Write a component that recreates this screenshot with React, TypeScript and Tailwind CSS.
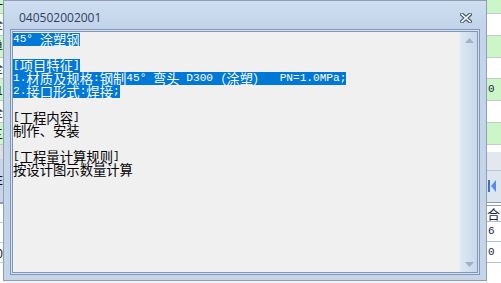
import type { ReactNode } from "react";

// half-width (ascii) runs get a mono face sized so each char is exactly half a CJK cell
function Mixed({ text }: { text: string }) {
  const parts = text.match(/[\x00-\xff]+|[^\x00-\xff]+/g) ?? [];
  return (
    <>
      {parts.map((p, i) =>
        /^[\x00-\xff]/.test(p) ? (
          <span key={i} className="font-['Liberation_Mono',monospace] text-[11.11px] leading-[13px]">
            {p}
          </span>
        ) : (
          <span key={i} className="font-['Noto_Sans_CJK_SC',sans-serif] text-[13.33px] leading-[13px]">
            {p}
          </span>
        )
      )}
    </>
  );
}

const LINES: { text: string; selected: boolean }[] = [
  { text: "45° 涂塑钢", selected: true },
  { text: "", selected: false },
  { text: "[项目特征]", selected: true },
  { text: "1.材质及规格:钢制45° 弯头 D300（涂塑）  PN=1.0MPa;", selected: true },
  { text: "2.接口形式:焊接;", selected: true },
  { text: "", selected: false },
  { text: "[工程内容]", selected: false },
  { text: "制作、安装", selected: false },
  { text: "", selected: false },
  { text: "[工程量计算规则]", selected: false },
  { text: "按设计图示数量计算", selected: false },
];

type Row = { h: string; bg: string; border?: string; content?: ReactNode };

const GREEN = "bg-[#ccf5c8]";

function StripRow({ h, bg, border, content }: Row) {
  return (
    <div className={`${h} ${bg} ${border ?? ""} flex items-center overflow-hidden whitespace-nowrap`}>
      {content}
    </div>
  );
}

function LeftStrip() {
  const frag = (c: string) => (
    <div className="flex w-full justify-end font-['Noto_Sans_CJK_SC',sans-serif] text-[12px] leading-none text-[#111]">
      <span className="shrink-0">{c}</span>
    </div>
  );
  const rows: Row[] = [
    { h: "h-[14px]", bg: GREEN, border: "border-b border-[#bcc8bc]", content: frag("计") },
    { h: "h-[22px]", bg: "bg-[#f4fbf2]", border: "border-b border-[#bcc8bc]", content: frag("全") },
    { h: "h-[22px]", bg: GREEN, border: "border-b border-[#bcc8bc]", content: frag("单") },
    { h: "h-[22px]", bg: "bg-[#f4fbf2]", border: "border-b border-[#bcc8bc]", content: frag("全") },
    { h: "h-[22px]", bg: GREEN, border: "border-b border-[#bcc8bc]", content: frag("1") },
    { h: "h-[22px]", bg: "bg-[#f4fbf2]", border: "border-b border-[#bcc8bc]", content: frag("全") },
    { h: "h-[22px]", bg: GREEN, border: "border-b border-[#bcc8bc]", content: frag("三") },
    { h: "h-[14px]", bg: "bg-[#dcdfe4]" },
    { h: "h-[45px]", bg: "bg-[#c6d4e6]", border: "border-b-2 border-[#8fa0b8]", content: frag("E") },
    { h: "h-[20px]", bg: "bg-white", border: "border-b border-[#c4ccd8]" },
    { h: "h-[20px]", bg: "bg-white", border: "border-b border-[#c4ccd8]" },
    { h: "h-[20px]", bg: "bg-white", border: "border-b border-[#c4ccd8]", content: frag("0") },
    { h: "h-[20px]", bg: "bg-white" },
  ];
  return (
    <div className="flex w-[3px] shrink-0 flex-col overflow-hidden">
      {rows.map((r, i) => (
        <StripRow key={i} {...r} />
      ))}
    </div>
  );
}

function RightStrip() {
  const cell = (c: string) => (
    <span className="pl-px font-['Liberation_Mono',monospace] text-[11px] leading-none text-[#1a2a44]">{c}</span>
  );
  const rows: Row[] = [
    { h: "h-[14px]", bg: GREEN, border: "border-b border-[#c3cfc3]" },
    { h: "h-[22px]", bg: "bg-white", border: "border-b border-[#c3cfc3]" },
    { h: "h-[22px]", bg: GREEN, border: "border-b border-[#c3cfc3]" },
    { h: "h-[22px]", bg: "bg-white", border: "border-b border-[#c3cfc3]" },
    { h: "h-[22px]", bg: GREEN, border: "border-b border-[#c3cfc3]", content: cell("0") },
    { h: "h-[22px]", bg: "bg-white", border: "border-b border-[#c3cfc3]" },
    { h: "h-[22px]", bg: GREEN, border: "border-b border-[#c3cfc3]" },
    { h: "h-[7px]", bg: "bg-white" },
    { h: "h-[19px]", bg: "bg-[#e3e8ef]", border: "border-b border-[#b7c4d6]" },
    {
      h: "h-[31px]",
      bg: "bg-[#dde5ef]",
      content: (
        <svg width="8" height="12" viewBox="0 0 8 12" className="ml-px">
          <rect x="0" y="0" width="2" height="12" fill="#3d6fd6" />
          <path d="M8 0 L3 6 L8 12 Z" fill="#5a8ae6" />
        </svg>
      ),
    },
    { h: "h-[4px]", bg: "bg-white", border: "border-y border-[#8a9bb3]" },
    {
      h: "h-[17px]",
      bg: "bg-white",
      border: "border-b border-[#b8c3d2]",
      content: (
        <span className="font-['Noto_Sans_CJK_SC',sans-serif] text-[13px] leading-none text-[#1a2a44]">合</span>
      ),
    },
    { h: "h-[20px]", bg: "bg-white", border: "border-b border-[#b8c3d2]", content: cell("6") },
    { h: "h-[21px]", bg: "bg-white", border: "border-b border-[#b8c3d2]", content: cell("0") },
    { h: "h-[20px]", bg: "bg-white" },
  ];
  return (
    <div className="flex min-w-0 flex-1 flex-col overflow-hidden">
      {rows.map((r, i) => (
        <StripRow key={i} {...r} />
      ))}
    </div>
  );
}

export default function App() {
  return (
    <div className="flex h-[283px] w-[501px] overflow-hidden bg-[#f2f4f7]">
      <LeftStrip />

      <div className="flex h-[281px] w-[484px] shrink-0 flex-col border border-[#8e9db3] bg-[#c4d5ea]">
        <div className="flex h-[28px] items-center justify-between bg-gradient-to-b from-[#cfdef1] to-[#c1d3ea] pt-[5px] pl-[15px] pr-[14px]">
          <span className="font-['Open_Sans',sans-serif] text-[12px] leading-none text-[#2f4260]">040502002001</span>
          <svg width="12" height="10" viewBox="0 0 12 10">
            <path d="M2 1.5 L10 8.5 M10 1.5 L2 8.5" stroke="#4a586c" strokeWidth="3.8" strokeLinecap="square" />
            <path d="M2 1.5 L10 8.5 M10 1.5 L2 8.5" stroke="#ffffff" strokeWidth="1.6" strokeLinecap="square" />
          </svg>
        </div>

        <div className="mx-[6px] h-[246px] border border-[#7f96b6] bg-[#d6e2f2] p-px">
          <div className="flex h-full border border-[#7f96b6]">
            <div className="min-w-0 flex-1 bg-[#f0f0f0] pt-px text-black">
              {LINES.map((line, i) => (
                <div key={i} className="flex h-[13px] items-center whitespace-pre">
                  {line.text &&
                    (line.selected ? (
                      <span className="inline-flex h-[13px] items-center bg-[#0078d7] text-white">
                        <Mixed text={line.text} />
                      </span>
                    ) : (
                      <span className="inline-flex h-[13px] items-center">
                        <Mixed text={line.text} />
                      </span>
                    ))}
                </div>
              ))}
            </div>

            <div className="flex w-[17px] shrink-0 flex-col items-center justify-between bg-gradient-to-r from-[#dfe8f4] to-[#c9d8eb] pt-[6px] pb-[5px] pl-px">
              <svg width="9" height="5" viewBox="0 0 9 5">
                <path d="M0 5 L4.5 0 L9 5 Z" fill="#a3b0c3" />
              </svg>
              <svg width="9" height="5" viewBox="0 0 9 5">
                <path d="M0 0 L4.5 5 L9 0 Z" fill="#a3b0c3" />
              </svg>
            </div>
          </div>
        </div>
      </div>

      <RightStrip />
    </div>
  );
}
